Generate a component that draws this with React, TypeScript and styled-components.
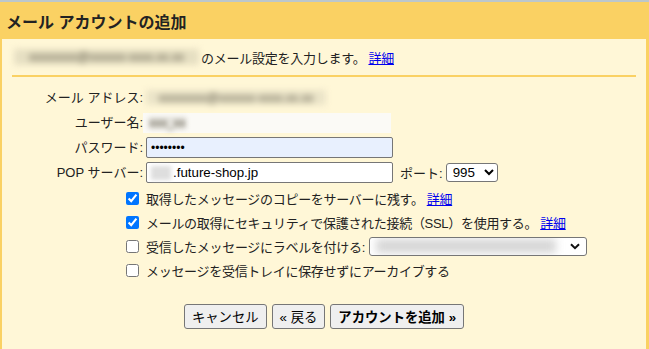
import React from "react";
import styled, { createGlobalStyle } from "styled-components";

const Global = createGlobalStyle`
  html, body { margin: 0; padding: 0; background: #fad163; }
  * { box-sizing: border-box; }
`;

const Frame = styled.div`
  height: 349px;
  border-top: 2px solid #bcc7cb;
  background: #fad163;
  padding: 0 3px 0 2px;
  display: flex;
  flex-direction: column;
  font-family: Arial, "Liberation Sans", "Noto Sans CJK JP", sans-serif;
  color: #222;
  overflow: hidden;
`;

const Title = styled.h1`
  margin: 0;
  height: 37px;
  padding-left: 4px;
  display: flex;
  align-items: center;
  font-size: 16px;
  font-weight: bold;
  color: #222;
`;

const Panel = styled.div`
  flex: 1;
  background: #fff7d7;
  padding: 9px 10px 0;
`;

const Intro = styled.div`
  height: 18px;
  padding-left: 2px;
  display: flex;
  align-items: center;
  font-size: 13px;
  letter-spacing: -0.25px;
  white-space: nowrap;
`;

const Smudge = styled.span<{ $w: number; $bg?: string; $h?: number; $blur?: number }>`
  display: inline-flex;
  align-items: center;
  justify-content: center;
  min-width: ${(p) => p.$w}px;
  height: ${(p) => p.$h ?? 16}px;
  color: #5a5545;
  font-size: 12px;
  letter-spacing: 0;
  background: ${(p) => p.$bg ?? "transparent"};
  filter: blur(${(p) => p.$blur ?? 3}px);
  white-space: nowrap;
`;

const Link = styled.a`
  color: #0000ee;
  text-decoration: underline;
  cursor: pointer;
  margin-left: 3px;
`;

const Divider = styled.hr`
  margin: 9px 0 0;
  border: 0;
  height: 2px;
  background: #fad163;
`;

const Fields = styled.div`
  display: grid;
  grid-template-columns: 131px auto;
  column-gap: 3px;
  row-gap: 4px;
  grid-auto-rows: 21px;
  align-items: center;
  padding-top: 10px;
  font-size: 13px;
`;

const Label = styled.label`
  text-align: right;
  white-space: nowrap;
  line-height: 21px;
`;

const Value = styled.div`
  display: flex;
  align-items: center;
  gap: 7px;
  height: 21px;
  white-space: nowrap;
`;

const TextBox = styled.div`
  width: 247px;
  height: 21px;
  border: 1px solid #767676;
  border-radius: 2px;
  background: #fff;
  display: flex;
  align-items: center;
  padding: 0 4px;
  font-size: 13.33px;
  color: #000;
`;

const PasswordInput = styled.input`
  width: 247px;
  height: 21px;
  border: 1px solid #767676;
  border-radius: 2px;
  background: #e8f0fe;
  padding: 0 4px;
  font-size: 12px;
  color: #000;
  outline: none;
  margin: 0;
`;

const BlurBox = styled.div`
  width: 248px;
  height: 20px;
  margin-left: -3px;
  background: #fbfaf6;
  display: flex;
  align-items: center;
  padding-left: 6px;
`;

const PortLabel = styled.span`
  display: flex;
  align-items: center;
  gap: 3px;
`;

const PortSelect = styled.select`
  width: 52px;
  height: 19px;
  font-size: 13.33px;
  font-family: Arial, "Liberation Sans", sans-serif;
  border: 1px solid #767676;
  border-radius: 3px;
  background: #fff;
  color: #000;
  padding: 0 0 0 2px;
  margin: 0;
`;

const Checks = styled.div`
  display: flex;
  flex-direction: column;
  padding: 3px 0 0 114px;
`;

const CheckRow = styled.label`
  display: flex;
  align-items: center;
  gap: 7px;
  height: 24px;
  font-size: 13px;
  letter-spacing: -0.3px;
  white-space: nowrap;
`;

const Box = styled.input`
  width: 13px;
  height: 13px;
  margin: 0;
  accent-color: #0075ff;
  flex: none;
`;

const FakeSelect = styled.div`
  width: 218px;
  height: 19px;
  margin-left: -3px;
  border: 1px solid #767676;
  border-radius: 3px;
  background: #fff;
  display: flex;
  align-items: center;
  justify-content: space-between;
  padding: 0 6px;
  overflow: hidden;
`;

const Buttons = styled.div`
  display: flex;
  justify-content: center;
  gap: 5px;
  margin-top: 22px;
`;

const Button = styled.button<{ $primary?: boolean }>`
  height: 25px;
  padding: 0 7px;
  border: 1px solid #767676;
  border-radius: 3px;
  background: #efefef;
  font-family: Arial, "Liberation Sans", "Noto Sans CJK JP", sans-serif;
  font-size: 13.33px;
  font-weight: ${(p) => (p.$primary ? "bold" : "normal")};
  color: #000;
  margin: 0;
`;

const Chevron = () => (
  <svg width="10" height="7" viewBox="0 0 10 7">
    <path d="M1 1.2l4 4 4-4" fill="none" stroke="#111" strokeWidth="2" />
  </svg>
);

export default function App() {
  return (
    <>
      <Global />
      <Frame>
        <Title>メール アカウントの追加</Title>
        <Panel>
          <Intro>
            <Smudge $w={185} $bg="#e6dfc2">xxxxxxxx@xxxxxx-xxxx.xx.xx</Smudge>
            <span style={{ marginLeft: 2 }}>のメール設定を入力します。</span>
            <Link>詳細</Link>
          </Intro>
          <Divider />
          <Fields>
            <Label>メール アドレス:</Label>
            <Value>
              <Smudge $w={180} $h={15} $bg="#ebe4c8">xxxxxxxx@xxxxxx-xxxx.xx.xx</Smudge>
            </Value>
            <Label>ユーザー名:</Label>
            <Value>
              <BlurBox>
                <Smudge $w={36} $h={12} $bg="#e4e2dc" $blur={2.5}>xxx_xx</Smudge>
              </BlurBox>
            </Value>
            <Label>パスワード:</Label>
            <Value>
              <PasswordInput type="password" defaultValue="password" readOnly />
            </Value>
            <Label>POP サーバー:</Label>
            <Value>
              <TextBox>
                <Smudge $w={20} $h={14} $bg="#dedede" $blur={2} />
                <span style={{ marginLeft: 2 }}>.future-shop.jp</span>
              </TextBox>
              <PortLabel>
                ポート:
                <PortSelect defaultValue="995">
                  <option value="995">995</option>
                  <option value="110">110</option>
                </PortSelect>
              </PortLabel>
            </Value>
          </Fields>
          <Checks>
            <CheckRow>
              <Box type="checkbox" defaultChecked />
              <span>
                取得したメッセージのコピーをサーバーに残す。
                <Link>詳細</Link>
              </span>
            </CheckRow>
            <CheckRow>
              <Box type="checkbox" defaultChecked />
              <span>
                メールの取得にセキュリティで保護された接続（SSL）を使用する。
                <Link>詳細</Link>
              </span>
            </CheckRow>
            <CheckRow>
              <Box type="checkbox" />
              <span>受信したメッセージにラベルを付ける:</span>
              <FakeSelect>
                <Smudge $w={180} $h={14} $bg="#d6d6d6" $blur={4} />
                <Chevron />
              </FakeSelect>
            </CheckRow>
            <CheckRow>
              <Box type="checkbox" />
              <span>メッセージを受信トレイに保存せずにアーカイブする</span>
            </CheckRow>
          </Checks>
          <Buttons>
            <Button>キャンセル</Button>
            <Button>« 戻る</Button>
            <Button $primary>アカウントを追加 »</Button>
          </Buttons>
        </Panel>
      </Frame>
    </>
  );
}
